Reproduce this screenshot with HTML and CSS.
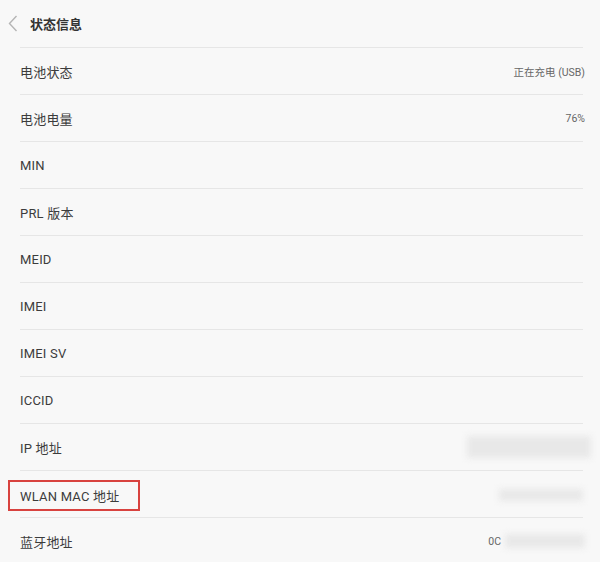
FILE: index.html
```html
<!DOCTYPE html>
<html lang="zh-CN">
<head>
  <meta charset="UTF-8">
  <meta name="viewport" content="width=device-width, initial-scale=1.0">
  <title>状态信息</title>
  <link rel="stylesheet" href="styles.css">
</head>
<body>
  <div class="header">
    <svg class="back" width="10" height="17" viewBox="0 0 10 17">
      <path d="M8.5 1 L1.5 8.5 L8.5 16" fill="none" stroke="#b5b5b5" stroke-width="1.4"/>
    </svg>
    <h3>状态信息</h3>
  </div>

  <div class="status-list">
    <div class="row"><span class="label">电池状态</span><span class="value">正在充电 (USB)</span></div>
    <div class="row"><span class="label">电池电量</span><span class="value">76%</span></div>
    <div class="row"><span class="label">MIN</span></div>
    <div class="row"><span class="label">PRL 版本</span></div>
    <div class="row"><span class="label">MEID</span></div>
    <div class="row"><span class="label">IMEI</span></div>
    <div class="row"><span class="label">IMEI SV</span></div>
    <div class="row"><span class="label">ICCID</span></div>
    <div class="row"><span class="label">IP 地址</span><span class="blur blur-ip"></span></div>
    <div class="row"><span class="label marked">WLAN MAC 地址</span><span class="blur blur-mac"></span></div>
    <div class="row"><span class="label">蓝牙地址</span><span class="value">0C<span class="blur blur-bt"></span></span></div>
  </div>
</body>
</html>
```

FILE: styles.css
```css
body {
  font-family: Roboto, "Noto Sans CJK SC", sans-serif;
  margin: 0;
  padding: 0;
  background-color: #f8f8f8;
  color: #3a3a3a;
  width: 600px;
  height: 562px;
  overflow: hidden;
}

.header {
  height: 47px;
  display: flex;
  align-items: center;
  padding-left: 8px;
}

.header .back {
  margin-right: 12px;
}

.header h3 {
  margin: 0;
  font-size: 13px;
  font-weight: bold;
  color: #333;
}

.status-list {
  margin: 0 17px 0 20px;
}

.row {
  height: 46px;
  border-top: 1px solid #e6e6e6;
  display: flex;
  align-items: center;
  justify-content: space-between;
}

.label {
  font-size: 13px;
  color: #3c3c3c;
  letter-spacing: 0.2px;
}

.label.marked {
  margin-left: -12px;
  margin-top: 2px;
  padding: 4px 19px 4px 10px;
  border: 2px solid #d8423f;
}

.value {
  font-size: 10.5px;
  color: #666;
  margin-right: -2px;
  display: flex;
  align-items: center;
}

.blur {
  display: inline-block;
  background-color: #e8e8e8;
  filter: blur(3px);
}

.blur-ip {
  width: 124px;
  height: 22px;
  margin-right: -8px;
}

.blur-mac {
  width: 84px;
  height: 12px;
  margin-top: 2px;
}

.blur-bt {
  width: 80px;
  height: 14px;
  margin-left: 4px;
}
```
